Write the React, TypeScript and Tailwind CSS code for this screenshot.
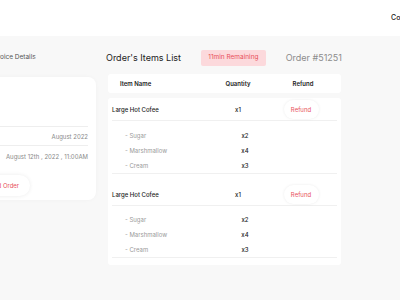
import React from "react";

const subs = [
  ["- Sugar", "x2"],
  ["- Marshmallow", "x4"],
  ["- Cream", "x3"],
];

function Group({ first }: { first: boolean }) {
  return (
    <div>
      <div className={`mx-[4px] flex h-[22px] items-center border-b border-[#f0f0f0] ${first ? "mt-[1px]" : "mt-[9px]"} box-content`}>
        <div className="w-[98px] text-[6px] font-medium text-[#222]">Large Hot Cofee</div>
        <div className="w-[56px] text-center text-[6px] font-medium text-[#222]">x1</div>
        <div className="flex w-[70px] justify-center">
          <button className="h-[19px] w-[35px] rounded-full bg-white text-[6px] text-[#e8505b] shadow-[0_0_3px_rgba(0,0,0,0.08)]">Refund</button>
        </div>
      </div>
      <div className={`mx-[4px] border-b border-[#f0f0f0] ${first ? "pt-[7px]" : "pt-[6px]"}`}>
        {subs.map(([n, q]) => (
          <div key={n} className="flex h-[15px] items-center">
            <div className="w-[105px] pl-[13px] text-[6px] text-[#9a9a9a]">{n}</div>
            <div className="w-[56px] text-center text-[6px] font-medium text-[#222]">{q}</div>
          </div>
        ))}
      </div>
    </div>
  );
}

export default function App() {
  return (
    <div className="h-[300px] w-[400px] overflow-hidden bg-[#f8f8f8] font-['Inter',sans-serif]">
      <div className="flex h-[36px] items-center justify-end bg-white">
        <span className="-mr-[6px] w-[15px] text-[7px] font-medium text-[#222]">Co</span>
      </div>
      <div className="flex pt-[13px]">
        <div className="-ml-[40px] w-[136px] shrink-0">
          <div className="pl-[31px] text-[6.5px] leading-[16px] text-[#555]">Invoice Details</div>
          <div className="mt-[12px] h-[123px] rounded-[8px] bg-white pl-[10px] pr-[8px] pt-[49px] shadow-[0_0_4px_rgba(0,0,0,0.03)]">
            <div className="flex h-[20px] items-center justify-end border-t-[1.5px] border-b-[1.5px] border-[#eeeeee] text-[6px] text-[#8a8a8a]">August 2022</div>
            <div className="flex h-[20px] items-center justify-end text-[6px] text-[#8a8a8a]">August 12th , 2022 , 11:00AM</div>
            <button className="mt-[9px] h-[21px] w-[60px] rounded-full bg-white text-[6px] text-[#e8505b] shadow-[0_0_4px_rgba(0,0,0,0.08)]">Refund Order</button>
          </div>
        </div>
        <div className="ml-[10px] w-[236px] shrink-0">
          <div className="flex h-[18px] items-center justify-between">
            <span className="text-[9px] text-[#222]">Order's Items List</span>
            <span className="flex h-[16px] items-center rounded-[2px] bg-[#fcd9dc] px-[7px] text-[6.5px] text-[#e8505b]">11min Remaining</span>
            <span className="text-[9px] text-[#8c8c8c]">Order #51251</span>
          </div>
          <div className="ml-[2px] mr-[1px]">
            <div className="mt-[7px] flex h-[19px] items-center rounded-[3px] bg-white text-[6px] font-semibold text-[#222]">
              <div className="w-[102px] pl-[12px]">Item Name</div>
              <div className="w-[56px] text-center">Quantity</div>
              <div className="w-[74px] text-center">Refund</div>
            </div>
            <div className="mt-[5px] rounded-[3px] bg-white pb-[7px]">
              <Group first />
              <Group first={false} />
            </div>
          </div>
        </div>
      </div>
    </div>
  );
}
